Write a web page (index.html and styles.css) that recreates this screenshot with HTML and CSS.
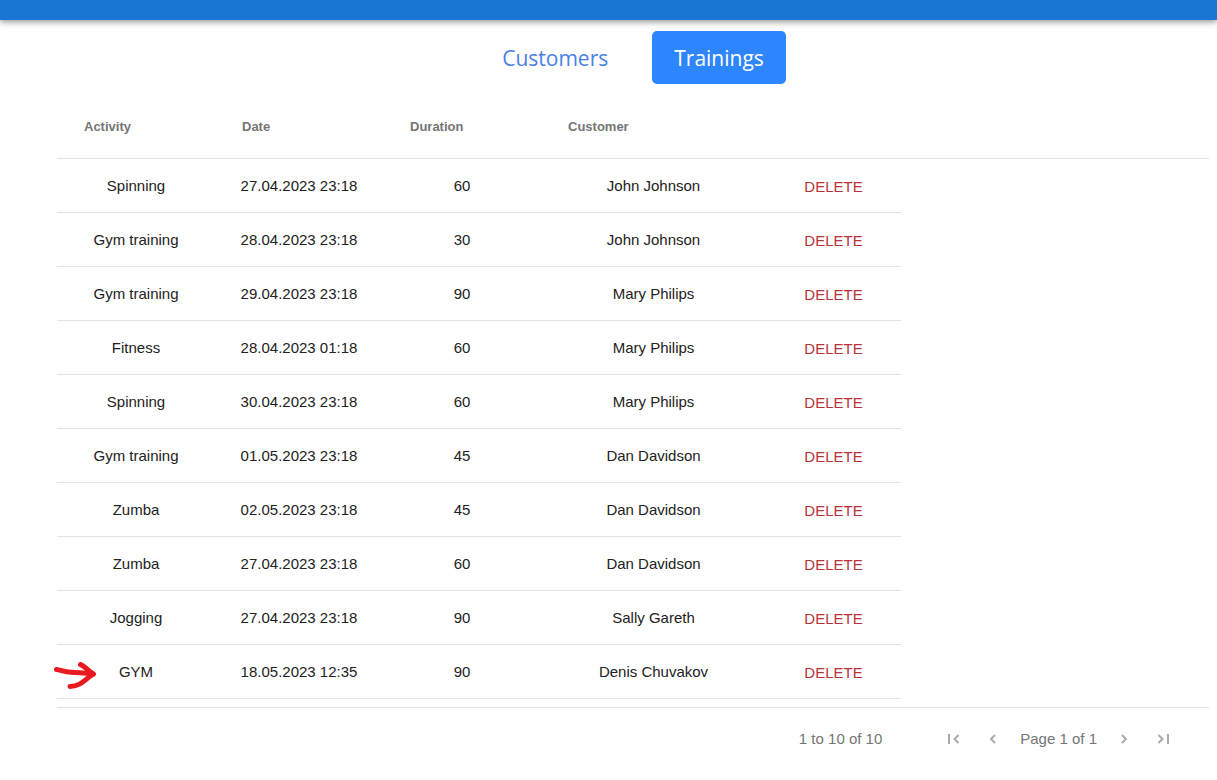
FILE: index.html
```html
<!DOCTYPE html>
<html lang="en">
<head>
<meta charset="utf-8">
<meta name="viewport" content="width=device-width, initial-scale=1">
<title>Trainings</title>
<link rel="stylesheet" href="styles.css">
</head>
<body>
<header class="app-bar"></header>
<main class="content">
  <nav class="tabs">
    <a class="tab" href="#customers">Customers</a>
    <a class="tab tab-active" href="#trainings" aria-current="page">Trainings</a>
  </nav>
  <table class="grid">
    <colgroup>
      <col class="col-activity"><col class="col-date"><col class="col-duration"><col class="col-customer"><col class="col-action"><col>
    </colgroup>
    <thead>
      <tr><th scope="col">Activity</th><th scope="col">Date</th><th scope="col">Duration</th><th scope="col">Customer</th><th></th><th></th></tr>
    </thead>
    <tbody>
      <tr><td>Spinning</td><td>27.04.2023 23:18</td><td>60</td><td>John Johnson</td><td><button class="delete" type="button">DELETE</button></td></tr>
      <tr><td>Gym training</td><td>28.04.2023 23:18</td><td>30</td><td>John Johnson</td><td><button class="delete" type="button">DELETE</button></td></tr>
      <tr><td>Gym training</td><td>29.04.2023 23:18</td><td>90</td><td>Mary Philips</td><td><button class="delete" type="button">DELETE</button></td></tr>
      <tr><td>Fitness</td><td>28.04.2023 01:18</td><td>60</td><td>Mary Philips</td><td><button class="delete" type="button">DELETE</button></td></tr>
      <tr><td>Spinning</td><td>30.04.2023 23:18</td><td>60</td><td>Mary Philips</td><td><button class="delete" type="button">DELETE</button></td></tr>
      <tr><td>Gym training</td><td>01.05.2023 23:18</td><td>45</td><td>Dan Davidson</td><td><button class="delete" type="button">DELETE</button></td></tr>
      <tr><td>Zumba</td><td>02.05.2023 23:18</td><td>45</td><td>Dan Davidson</td><td><button class="delete" type="button">DELETE</button></td></tr>
      <tr><td>Zumba</td><td>27.04.2023 23:18</td><td>60</td><td>Dan Davidson</td><td><button class="delete" type="button">DELETE</button></td></tr>
      <tr><td>Jogging</td><td>27.04.2023 23:18</td><td>90</td><td>Sally Gareth</td><td><button class="delete" type="button">DELETE</button></td></tr>
      <tr><td class="marked"><svg class="marker" viewBox="0 0 44 30" aria-hidden="true"><path d="M3.500 9.500C8 10 11 12 18 12.200C25 12.500 31 13 39 13.700M27.500 4.500C31 5.500 33 9 40.500 14M39.500 14.500C33 18 29 26 17 26.500"/></svg>GYM</td><td>18.05.2023 12:35</td><td>90</td><td>Denis Chuvakov</td><td><button class="delete" type="button">DELETE</button></td></tr>
    </tbody>
  </table>
  <footer class="pager">
    <span class="summary">1 to 10 of 10</span>
    <div class="pages">
      <button class="page-button page-first" type="button" aria-label="First page" disabled><svg class="icon" viewBox="0 0 16 16"><path d="M3 3V13"/><path class="chevron" d="M12.500 4L8.500 8L12.500 12"/></svg></button>
      <button class="page-button" type="button" aria-label="Previous page" disabled><svg class="icon" viewBox="0 0 16 16"><path class="chevron" d="M10 4L6 8L10 12"/></svg></button>
      <span>Page 1 of 1</span>
      <button class="page-button" type="button" aria-label="Next page" disabled><svg class="icon" viewBox="0 0 16 16"><path class="chevron" d="M6 4L10 8L6 12"/></svg></button>
      <button class="page-button page-last" type="button" aria-label="Last page" disabled><svg class="icon" viewBox="0 0 16 16"><path d="M13 3V13"/><path class="chevron" d="M3.500 4L7.500 8L3.500 12"/></svg></button>
    </div>
  </footer>
</main>
</body>
</html>
```
FILE: styles.css
```css
* {
  box-sizing: border-box;
}

body {
  margin: 0;
  background: #fff;
  color: #222;
  font-family: "Liberation Sans", Arial, sans-serif;
  font-size: 15px;
}

.app-bar {
  height: 20px;
  background: #1976d2;
  box-shadow: 0 2px 4px -1px rgba(0, 0, 0, 0.2), 0 4px 5px rgba(0, 0, 0, 0.14), 0 1px 10px rgba(0, 0, 0, 0.12);
}

.content {
  padding: 11px 8px 0 57px;
}

.tabs {
  display: flex;
  justify-content: center;
  gap: 22px;
}

.tab {
  padding: 2px 22px 0;
  border-radius: 5px;
  color: #4a80e8;
  font-family: "Open Sans", "Noto Sans", sans-serif;
  font-size: 21px;
  line-height: 51px;
  text-decoration: none;
}

.tab-active {
  background: #2e86ff;
  color: #fff;
}

.grid {
  width: 100%;
  margin-top: 11px;
  border-collapse: separate;
  border-spacing: 0;
  table-layout: fixed;
}

.col-activity,
.col-duration {
  width: 158px;
}

.col-date {
  width: 168px;
}

.col-customer {
  width: 225px;
}

.col-action {
  width: 135px;
}

.grid th {
  height: 64px;
  padding: 0 27px;
  border-bottom: 1px solid #e2e2e2;
  color: #757575;
  font-size: 13px;
  text-align: left;
}

.grid td {
  height: 54px;
  padding: 0;
  border-bottom: 1px solid #e2e2e2;
  text-align: center;
}

.delete {
  padding: 7px 8px 5px;
  border: 0;
  background: none;
  color: #b9333a;
  font: inherit;
  line-height: 24px;
  cursor: pointer;
}

.marked {
  position: relative;
}

.marker {
  position: absolute;
  top: 15px;
  left: -4px;
  width: 44px;
  height: 30px;
  fill: none;
  stroke: #e8191f;
  stroke-width: 5;
  stroke-linecap: round;
  stroke-linejoin: round;
}

.pager {
  display: flex;
  align-items: center;
  justify-content: flex-end;
  gap: 64px;
  height: 62px;
  margin-top: 8px;
  padding-right: 38px;
  border-top: 1px solid #e2e2e2;
  color: #757575;
}

.pages {
  display: flex;
  align-items: center;
  gap: 19px;
}

.page-button {
  display: flex;
  padding: 0;
  border: 0;
  background: none;
}

.page-first {
  margin-right: 4px;
}

.page-last {
  margin-left: 4px;
}

.icon {
  width: 16px;
  height: 16px;
  fill: none;
  stroke: #aaa;
  stroke-width: 2;
}
```
